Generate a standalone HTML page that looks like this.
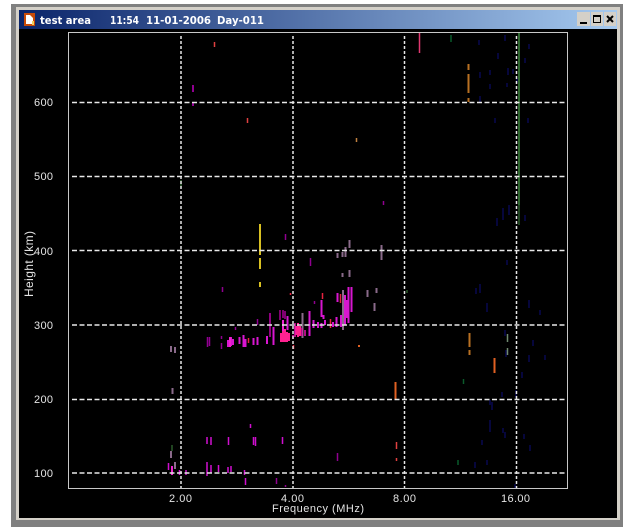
<!DOCTYPE html>
<html><head><meta charset="utf-8"><style>
html,body{margin:0;padding:0;background:#fff}
body{width:638px;height:532px;overflow:hidden;position:relative;font-family:"Liberation Sans",sans-serif}
svg{position:absolute;left:0;top:0}
</style></head><body>
<svg width="638" height="532" viewBox="0 0 638 532" font-family="Liberation Sans, sans-serif">
<defs>
<linearGradient id="tb" x1="0" x2="1" y1="0" y2="0"><stop offset="0" stop-color="#0a246a"/><stop offset="1" stop-color="#a6caf0"/></linearGradient>
<filter id="b" x="0" y="0" width="1" height="1" filterUnits="objectBoundingBox"><feGaussianBlur stdDeviation="0.35"/></filter>
</defs>
<rect x="11" y="4" width="612" height="523" fill="#808080"/>
<rect x="16" y="7" width="604" height="513" fill="#d4d0c8"/>
<rect x="19" y="29" width="598" height="489" fill="#000"/>
<rect x="19" y="10" width="598" height="19" fill="url(#tb)"/>
<!-- title icon -->
<rect x="24" y="13" width="11" height="13" fill="#c84a08"/>
<path d="M26 15h4l3 3v6h-7z" fill="#fff"/>
<rect x="32" y="21" width="2" height="4" fill="#f0d060"/>
<text x="40" y="24" font-size="11" font-weight="bold" fill="#fff" font-family="DejaVu Sans, sans-serif" textLength="51" lengthAdjust="spacingAndGlyphs">test area</text>
<text x="110" y="24" font-size="11" font-weight="bold" fill="#fff" font-family="DejaVu Sans, sans-serif" textLength="29" lengthAdjust="spacingAndGlyphs">11:54</text>
<text x="146" y="24" font-size="11" font-weight="bold" fill="#fff" font-family="DejaVu Sans, sans-serif" textLength="65" lengthAdjust="spacingAndGlyphs">11-01-2006</text>
<text x="217" y="24" font-size="11" font-weight="bold" fill="#fff" font-family="DejaVu Sans, sans-serif" textLength="47" lengthAdjust="spacingAndGlyphs">Day-011</text>
<!-- buttons -->
<g shape-rendering="crispEdges">
<rect x="577" y="12" width="13" height="14" fill="#d4d0c8"/>
<rect x="580" y="22" width="7" height="2" fill="#000"/>
<rect x="591" y="12" width="12" height="14" fill="#d4d0c8"/>
<rect x="593.500" y="15.500" width="7" height="7" fill="none" stroke="#000"/>
<rect x="593" y="15" width="8" height="2" fill="#000"/>
<rect x="604" y="12" width="12" height="14" fill="#d4d0c8"/>
</g>
<path d="M607 16l6 6M613 16l-6 6" stroke="#000" stroke-width="2" fill="none"/>
<!-- marks -->
<g fill="none" filter="url(#b)">
<rect x="19" y="29" width="598" height="489" stroke="none"/>
<g stroke-width="1.500">
<path stroke="#0c0c50" d="M505 35v6M498 53v6M480 72v6M508 68v7M490 70v5M479 40v5M529 44v5M525 58v5M513 69v5M517 78v5M480 96v6M490 84v5M507 83v4M528 118v5M495 118v5M487 303v9M505 330v6M506 350v7M529 355v7M516 390v8M490 420v12M492 402v8M503 208v12M497 218v8M509 205v10M525 215v6M480 284v9M476 288v6M533 340v6M522 372v6M502 392v5M490 400v5M515 484v5M524 434v5M487 460v5M505 432v6M503 428v5M530 445v6M482 440v5M475 462v6M540 310v5M545 355v5M529 300v8M507 260v5"/>
<path stroke="#3f8a3f" d="M519 33v172"/>
<path stroke="#2a5a2a" d="M519 205v20M172 445v6M181 180v8M407 290v3"/>
<path stroke="#0a5a2a" d="M451 35v7M458 460v5M463.500 379v5"/>
<path stroke="#e03870" d="M419.500 33v20"/>
<path stroke="#708a70" d="M507.500 334v8M507.500 348v7"/>
<path stroke="#c08040" d="M356.500 138v4"/>
<path stroke="#e04040" d="M214.500 42v5M247.500 118v5M396.500 442v7M396.500 458v3"/>
<path stroke="#900090" d="M383.500 201v4M285.500 234v6M222.500 287v5M337.500 453v8M310.500 258v8M314.500 301v3M285.500 485v2M207.500 337v10M209.500 337v9M257.500 319v6M221.500 336v3M221.500 343v6M235.500 327v3M276.500 478v6"/>
<path stroke="#d010d0" d="M207 437v7M211 437v8M228.500 437v8M253.500 437v8M255.500 437v9M282.500 437v7M250.500 424v4M168.500 463v7M207 462v14M211 465v8M218.500 465v7M228 467v6M231 466v6M244.500 470v5M245.500 478v7M179.500 470v5M186 470v5"/>
</g>
<path stroke="#b87020" stroke-width="2" d="M468.500 64v6M468.500 74v19M468.500 98v4M469.500 333v14M469.500 350v5"/>
<path stroke="#e06020" stroke-width="2" d="M494.500 358v15M395.500 382v17M359 345v2"/>
<path stroke="#d8c020" stroke-width="2" d="M260 224v31M260 258v11M260 282v5"/>
<path stroke="#900090" stroke-width="2" d="M193 85v7M193 103v3"/>
<path stroke="#8a6a8a" stroke-width="2" d="M171 346v6M172.500 388v6M175 347v6M171 451v7M175 462v7M302.500 313v25M343 290v40M349.500 270v7M342.500 273v4M349.500 240v8M345.500 247v10M342.500 252v5M337.500 253v5M367.500 290v7M374.500 303v8M381.500 245v15M376.500 288v5"/>
<path stroke="#d814d0" stroke-width="2" d="M273.500 327v18M287.500 316v14M309.500 311v25M313.500 320v8M321.500 300v17M321.500 323v5M323.500 315v4M336.500 317v10M337.500 293v9M351.500 287v25M348.500 287v36M345 295v30M239.500 337v7M243.500 335v12M245.500 339v8M253.500 338v7M257.500 337v8M267 336v8M228 340v7M231 337v9M233 339v6M318 322v6M325 320v5M333 322v5M341 315v12M347 300v18"/>
<path stroke="#f020d0" stroke-width="2" d="M172 466v9M230 337v10M283 320v12"/>
<path stroke="#ff2090" stroke-width="2" d="M281 333v9M283 331v11M285 329v13M287 332v10M289 333v8M296 326v9M298 323v14M300 326v10"/>
<path stroke="#e818b0" stroke-width="1.500" d="M293 335v4M295 323v14M302 328v8M305 330v6"/>
<path stroke="#800070" stroke-width="2" d="M280 310v10M283 310v8M285 311v8"/>
<path stroke="#900080" stroke-width="2" d="M270 313v24"/>
<path stroke="#e82040" stroke-width="1.500" d="M248.500 338v5M290.500 293v2M322.500 293v6M330.500 319v9M340.500 294v9M293.500 345v4"/>
<!-- grid -->
<g stroke="#e8e8e8">
<path stroke-width="1.500" stroke-dasharray="5 2.500" d="M72 102.500H568M72 176.500H568M72 250.500H568M72 325H568M72 399.500H568M72 473H568"/>
<path stroke-width="1.500" stroke-dasharray="3 2" d="M181 36V489M293 36V489M404.500 36V489M516.500 36V489"/>
</g>
<rect x="68.500" y="32.500" width="499" height="456" stroke="#c8c8c8" stroke-width="1"/>
</g>
<!-- labels -->
<g fill="#e4e4e4" font-size="11">
<text x="34" y="106" textLength="19">600</text>
<text x="34" y="180" textLength="19">500</text>
<text x="34" y="255" textLength="19">400</text>
<text x="34" y="329" textLength="19">300</text>
<text x="34" y="403" textLength="19">200</text>
<text x="34" y="477" textLength="19">100</text>
<text x="169" y="502" textLength="23">2.00</text>
<text x="281" y="502" textLength="23">4.00</text>
<text x="393" y="502" textLength="23">8.00</text>
<text x="501" y="502" textLength="29">16.00</text>
<text x="272" y="512" textLength="92">Frequency (MHz)</text>
<text transform="translate(33 297) rotate(-90)" font-size="12" textLength="66">Height (km)</text>
</g>
</svg>
</body></html>
